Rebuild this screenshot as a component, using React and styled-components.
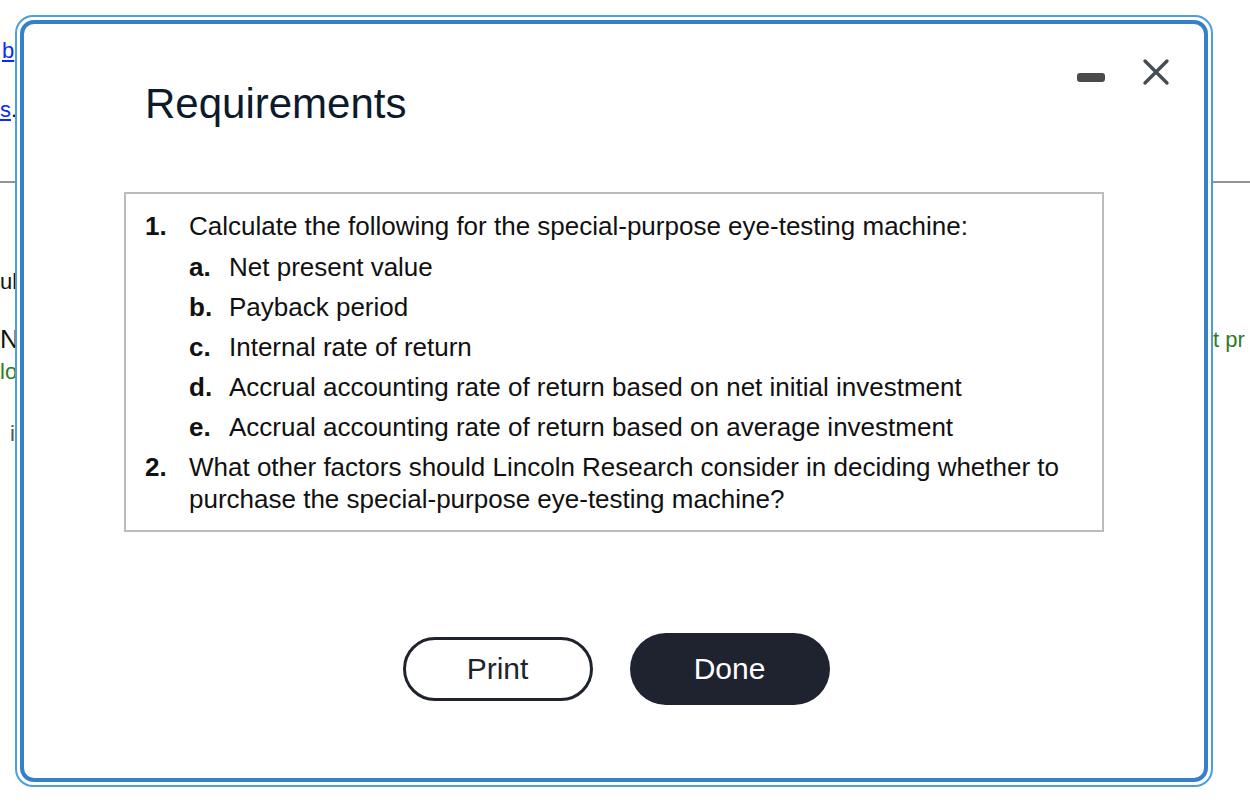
import React from "react";
import styled, { createGlobalStyle } from "styled-components";

const GlobalStyle = createGlobalStyle`
  html, body { margin: 0; padding: 0; background: #fff; }
  body { font-family: "Liberation Sans", Arial, Helvetica, sans-serif; }
  * { box-sizing: border-box; }
`;

const Page = styled.div`
  position: relative;
  width: 1250px;
  height: 807px;
  overflow: hidden;
  background: #fff;
  font-size: 22px;
  line-height: 26px;
  color: #111;
`;

const BgTop = styled.div`
  display: flex;
  flex-direction: column;
  align-items: flex-start;
  padding-top: 38px;
`;

const BgLine = styled.div`
  margin-top: ${(p) => p.$gap || 0}px;
  margin-left: ${(p) => p.$indent || 0}px;
  color: ${(p) => p.$color || "#111"};
  font-size: ${(p) => p.$size || 22}px;
  line-height: ${(p) => p.$lh || 26}px;
  white-space: nowrap;
`;

const BgLink = styled.span`
  color: #0a2cf0;
  text-decoration: underline;
  text-underline-offset: 2px;
`;

const Rule = styled.hr`
  margin: 58px 0 0;
  border: 0;
  height: 2px;
  background: #8e949c;
`;

const BgLower = styled.div`
  display: flex;
  justify-content: space-between;
  align-items: flex-start;
`;

const BgLeft = styled.div`
  display: flex;
  flex-direction: column;
  align-items: flex-start;
`;

const BgRight = styled.div`
  width: 37px;
  overflow: hidden;
  margin-top: 144px;
  white-space: nowrap;
  color: #2e7d1f;
`;

const Dialog = styled.div`
  position: absolute;
  top: 15px;
  left: 15px;
  width: 1198px;
  height: 772px;
  padding: 3px;
  background: #fff;
  border: 2px solid #4d9fdb;
  border-radius: 18px;
`;

const DialogInner = styled.div`
  height: 100%;
  border: 4px solid #3580c6;
  border-radius: 14px;
  display: flex;
  flex-direction: column;
`;

const Header = styled.div`
  display: flex;
  justify-content: space-between;
  align-items: flex-start;
  padding: 34px 34px 0 121px;
`;

const Title = styled.h1`
  margin: 25px 0 0;
  font-size: 42px;
  line-height: 41px;
  font-weight: 400;
  color: #0c1a2c;
`;

const Controls = styled.div`
  display: flex;
  align-items: flex-start;
  gap: 37px;
`;

const MinimizeButton = styled.button`
  margin-top: 15px;
  width: 28px;
  height: 9px;
  border: 0;
  padding: 0;
  border-radius: 3px;
  background: #4a4b4d;
  cursor: pointer;
`;

const CloseButton = styled.button`
  width: 28px;
  height: 28px;
  border: 0;
  padding: 0;
  background: none;
  cursor: pointer;
  display: block;
  svg { display: block; }
`;

const Box = styled.div`
  margin: 68px 100px 0;
  border: 2px solid #bcbcbc;
  padding: 16px 20px 15px 19px;
  font-size: 26px;
  line-height: 32px;
  color: #111;
`;

const List = styled.ol`
  list-style: none;
  margin: 0;
  padding: 0;
  display: flex;
  flex-direction: column;
  gap: 8px;
`;

const Item = styled.li`
  display: grid;
  grid-template-columns: ${(p) => p.$label}px 1fr;
`;

const Label = styled.span`
  font-weight: 700;
`;

const SubList = styled(List)`
  margin-top: 9px;
`;

const Footer = styled.div`
  display: flex;
  justify-content: center;
  align-items: center;
  gap: 37px;
  margin-top: 101px;
  padding-left: 4px;
`;

const PillButton = styled.button`
  font-family: "Liberation Sans", Arial, Helvetica, sans-serif;
  font-size: 30px;
  border-radius: 40px;
  cursor: pointer;
  width: ${(p) => (p.$primary ? 200 : 190)}px;
  height: ${(p) => (p.$primary ? 72 : 64)}px;
  background: ${(p) => (p.$primary ? "#1f2330" : "#fff")};
  color: ${(p) => (p.$primary ? "#fff" : "#1f232c")};
  border: ${(p) => (p.$primary ? "0" : "3px solid #1f232c")};
  padding: 0;
`;

const subItems = [
  ["a.", "Net present value"],
  ["b.", "Payback period"],
  ["c.", "Internal rate of return"],
  ["d.", "Accrual accounting rate of return based on net initial investment"],
  ["e.", "Accrual accounting rate of return based on average investment"],
];

export default function App() {
  return (
    <>
      <GlobalStyle />
      <Page>
        <BgTop>
          <BgLine $indent={2}>
            <BgLink>b</BgLink>
          </BgLine>
          <BgLine $gap={33}>
            <BgLink>s</BgLink>.
          </BgLine>
        </BgTop>
        <Rule />
        <BgLower>
          <BgLeft>
            <BgLine $gap={86}>ula</BgLine>
            <BgLine $gap={29} $size={26} $lh={30}>N</BgLine>
            <BgLine $gap={5} $color="#2e7d1f">lo</BgLine>
            <BgLine $gap={36} $indent={10} $color="#555">i</BgLine>
          </BgLeft>
          <BgRight>t pr</BgRight>
        </BgLower>

        <Dialog role="dialog" aria-label="Requirements">
          <DialogInner>
            <Header>
              <Title>Requirements</Title>
              <Controls>
                <MinimizeButton aria-label="Minimize" />
                <CloseButton aria-label="Close">
                  <svg width="28" height="28" viewBox="0 0 28 28">
                    <path
                      d="M3 3 L25 25 M25 3 L3 25"
                      stroke="#454d55"
                      strokeWidth="3.4"
                      strokeLinecap="round"
                      fill="none"
                    />
                  </svg>
                </CloseButton>
              </Controls>
            </Header>
            <Box>
              <List>
                <Item $label={44}>
                  <Label>1.</Label>
                  <div>
                    Calculate the following for the special-purpose eye-testing machine:
                    <SubList>
                      {subItems.map(([l, t]) => (
                        <Item key={l} $label={40}>
                          <Label>{l}</Label>
                          <span>{t}</span>
                        </Item>
                      ))}
                    </SubList>
                  </div>
                </Item>
                <Item $label={44}>
                  <Label>2.</Label>
                  <span>
                    What other factors should Lincoln Research consider in deciding whether to
                    purchase the special-purpose eye-testing machine?
                  </span>
                </Item>
              </List>
            </Box>
            <Footer>
              <PillButton>Print</PillButton>
              <PillButton $primary>Done</PillButton>
            </Footer>
          </DialogInner>
        </Dialog>
      </Page>
    </>
  );
}
